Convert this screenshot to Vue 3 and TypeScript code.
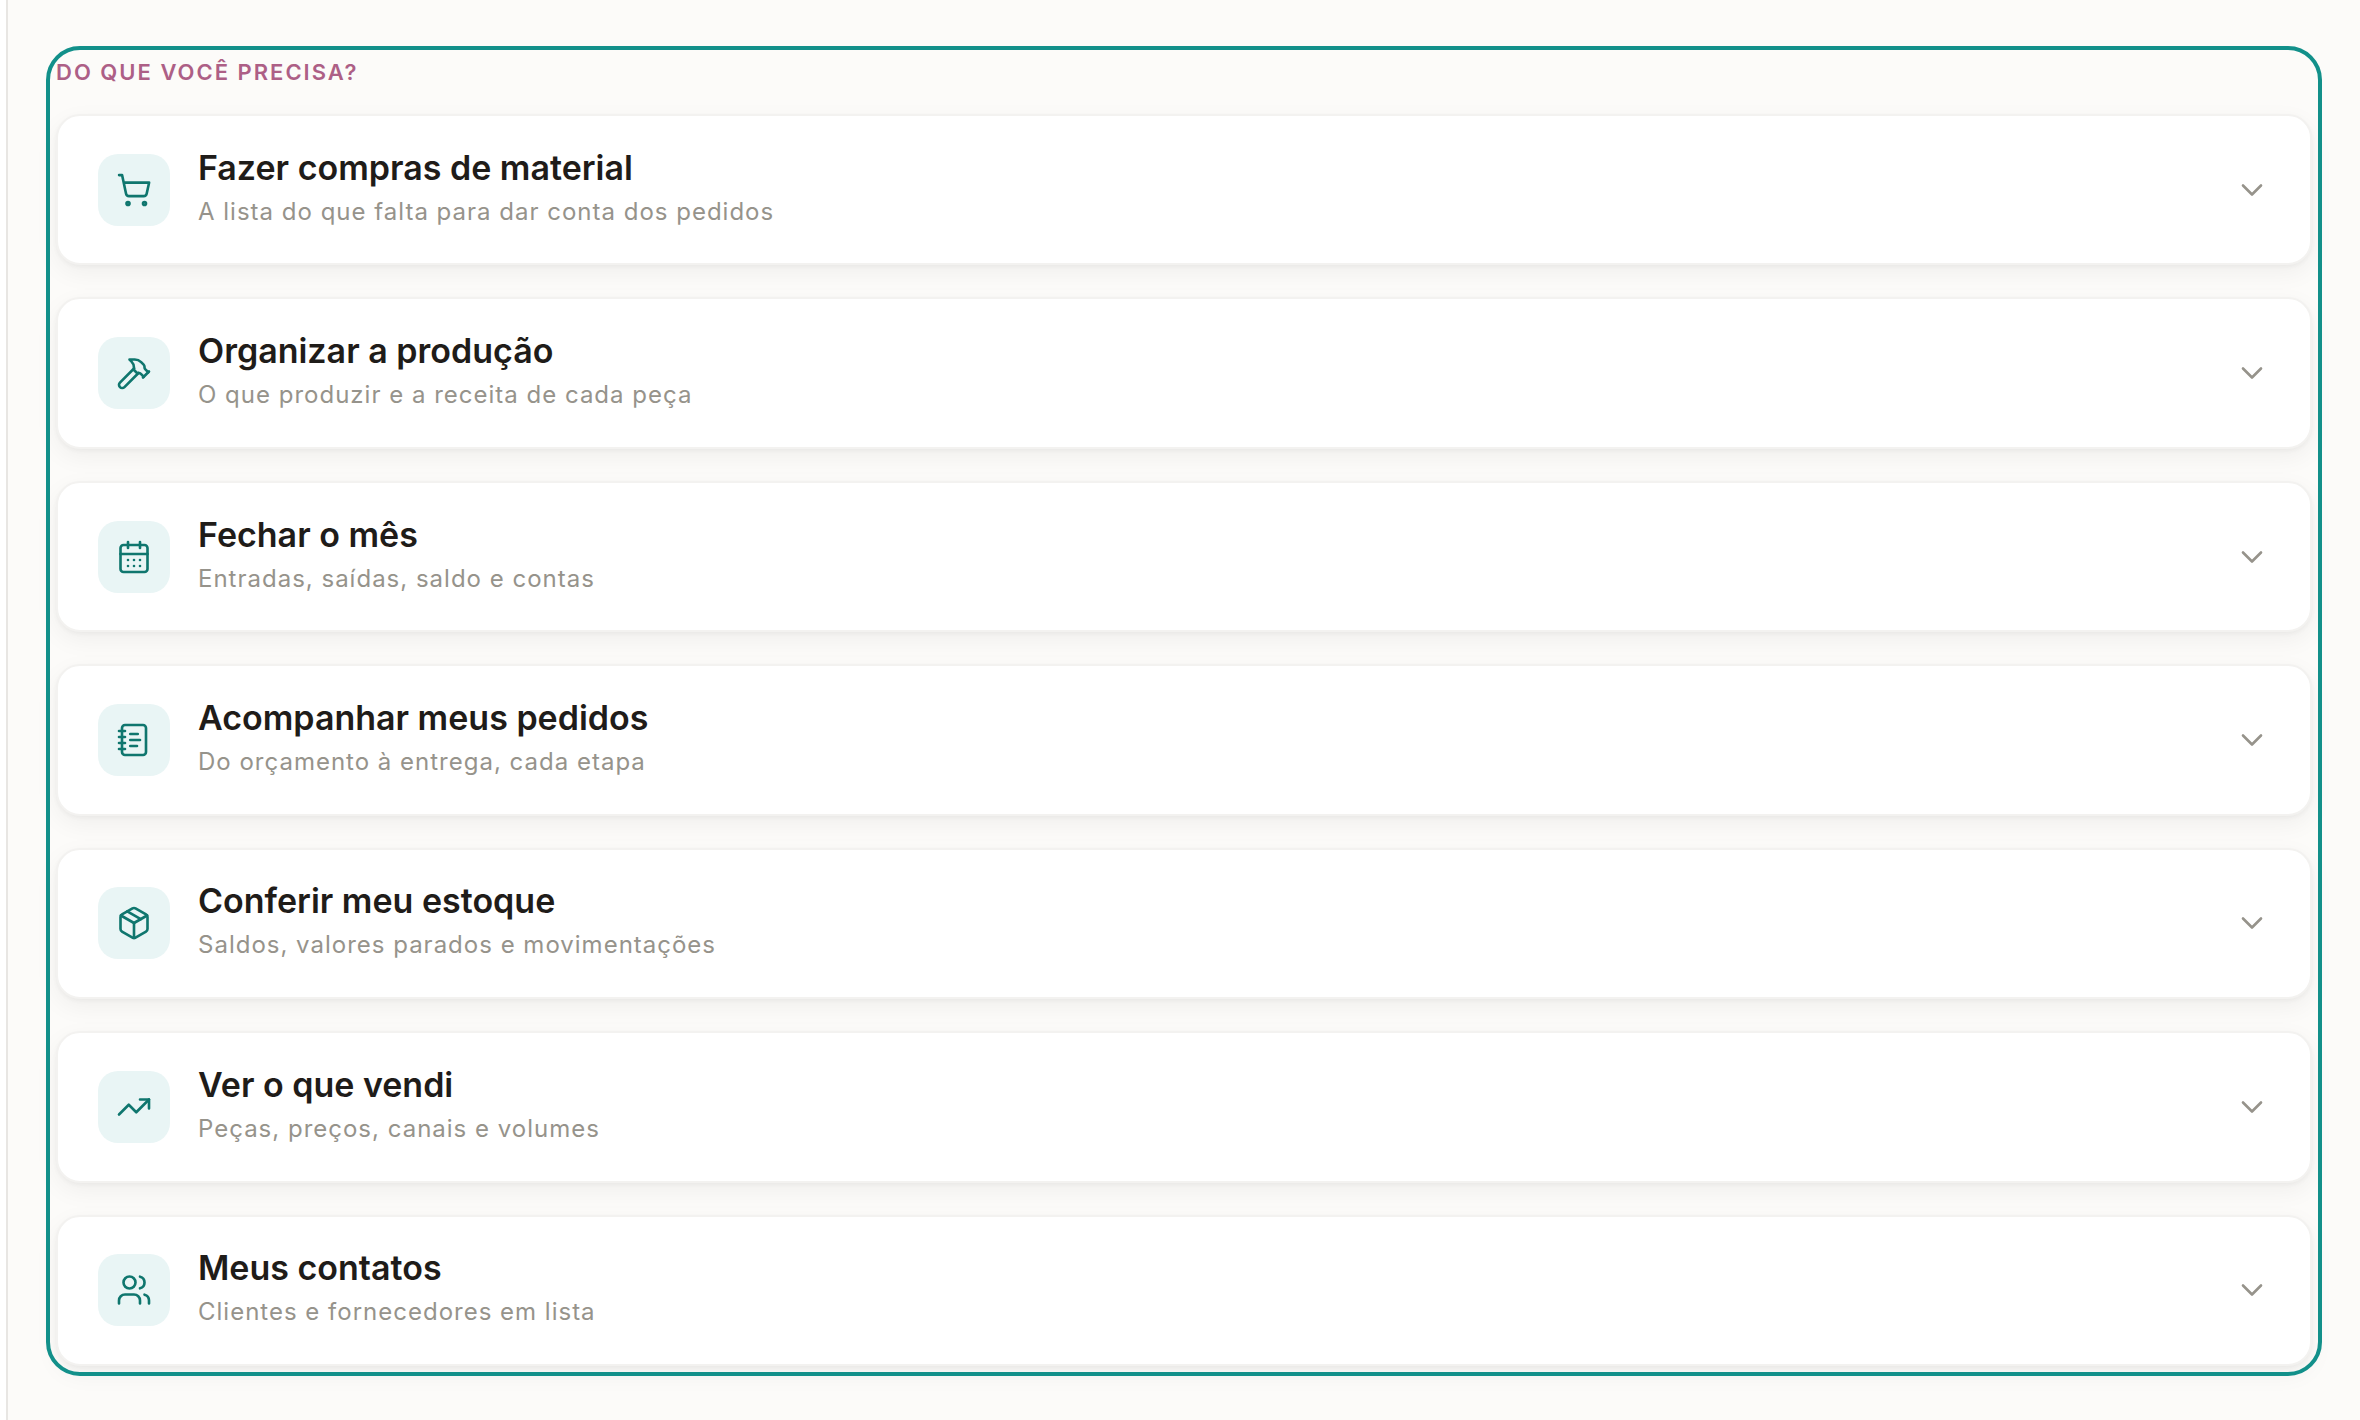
<script setup lang="ts">
import { ref } from 'vue'

interface Shortcut {
  id: string
  title: string
  description: string
  paths: string[]
}

const shortcuts: Shortcut[] = [
  {
    id: 'compras',
    title: 'Fazer compras de material',
    description: 'A lista do que falta para dar conta dos pedidos',
    paths: [
      'M7 21a1 1 0 1 0 2 0a1 1 0 1 0 -2 0',
      'M18 21a1 1 0 1 0 2 0a1 1 0 1 0 -2 0',
      'M2.05 2.05h2l2.66 12.42a2 2 0 0 0 2 1.58h9.78a2 2 0 0 0 1.95-1.57l1.65-7.43H5.12',
    ],
  },
  {
    id: 'producao',
    title: 'Organizar a produção',
    description: 'O que produzir e a receita de cada peça',
    paths: [
      'm15 12-9.373 9.373a1 1 0 0 1-3.001-3L12 9',
      'm18 15 4-4',
      'm21.5 11.5-1.914-1.914A2 2 0 0 1 19 8.172v-.344a2 2 0 0 0-.586-1.414l-1.657-1.657A6 6 0 0 0 12.516 3H9l1.243 1.243A6 6 0 0 1 12 8.485V10l2 2h1.172a2 2 0 0 1 1.414.586L18.5 14.5',
    ],
  },
  {
    id: 'mes',
    title: 'Fechar o mês',
    description: 'Entradas, saídas, saldo e contas',
    paths: [
      'M8 2v4',
      'M16 2v4',
      'M5 4h14a2 2 0 0 1 2 2v14a2 2 0 0 1-2 2H5a2 2 0 0 1-2-2V6a2 2 0 0 1 2-2z',
      'M3 10h18',
      'M8 14h.01M12 14h.01M16 14h.01M8 18h.01M12 18h.01M16 18h.01',
    ],
  },
  {
    id: 'pedidos',
    title: 'Acompanhar meus pedidos',
    description: 'Do orçamento à entrega, cada etapa',
    paths: [
      'M2 6h4M2 10h4M2 14h4M2 18h4',
      'M6 2h12a2 2 0 0 1 2 2v16a2 2 0 0 1-2 2H6a2 2 0 0 1-2-2V4a2 2 0 0 1 2-2z',
      'M9.5 8h5M9.5 12H16M9.5 16H14',
    ],
  },
  {
    id: 'estoque',
    title: 'Conferir meu estoque',
    description: 'Saldos, valores parados e movimentações',
    paths: [
      'M11 21.73a2 2 0 0 0 2 0l7-4A2 2 0 0 0 21 16V8a2 2 0 0 0-1-1.73l-7-4a2 2 0 0 0-2 0l-7 4A2 2 0 0 0 3 8v8a2 2 0 0 0 1 1.73z',
      'M12 22V12',
      'M3.29 7 12 12 20.71 7',
      'm7.5 4.27 9 5.15',
    ],
  },
  {
    id: 'vendas',
    title: 'Ver o que vendi',
    description: 'Peças, preços, canais e volumes',
    paths: ['M22 7 13.5 15.5 8.5 10.5 2 17', 'M16 7h6v6'],
  },
  {
    id: 'contatos',
    title: 'Meus contatos',
    description: 'Clientes e fornecedores em lista',
    paths: [
      'M16 21v-2a4 4 0 0 0-4-4H6a4 4 0 0 0-4 4v2',
      'M5 7a4 4 0 1 0 8 0a4 4 0 1 0 -8 0',
      'M22 21v-2a4 4 0 0 0-3-3.87',
      'M16 3.13a4 4 0 0 1 0 7.75',
    ],
  },
]

const selected = ref<string | null>(null)

function toggle(id: string): void {
  selected.value = selected.value === id ? null : id
}
</script>

<template>
  <div class="shell">
    <main class="page">
      <section class="needs" aria-labelledby="needs-title">
        <h2 id="needs-title" class="needs-title">DO QUE VOCÊ PRECISA?</h2>
        <ul class="list">
          <li v-for="item in shortcuts" :key="item.id" class="item">
            <button
              type="button"
              class="card"
              :aria-expanded="selected === item.id"
              @click="toggle(item.id)"
            >
              <span class="tile">
                <svg class="icon" viewBox="0 0 24 24" aria-hidden="true">
                  <path v-for="d in item.paths" :key="d" :d="d" />
                </svg>
              </span>
              <span class="text">
                <span class="title">{{ item.title }}</span>
                <span class="description">{{ item.description }}</span>
              </span>
              <svg class="icon chevron" viewBox="0 0 24 24" aria-hidden="true">
                <path d="m6 9 6 6 6-6" />
              </svg>
            </button>
          </li>
        </ul>
      </section>
    </main>
  </div>
</template>

<style>
body {
  margin: 0;
  background: #fcfbf9;
}
</style>

<style scoped>
.shell {
  box-sizing: border-box;
  display: flex;
  min-height: 100vh;
  padding-left: 6px;
  background: #ffffff;
  font-family: Inter, 'Liberation Sans', sans-serif;
}

.page {
  flex: 1;
  display: flex;
  min-width: 0;
  padding: 56px 48px 54px;
  border-left: 2px solid #e8e6e3;
  background: #fcfbf9;
}

.needs {
  flex: 1;
  display: flex;
  flex-direction: column;
  gap: 26px;
  min-width: 0;
  border-radius: 24px;
  outline: 4px solid #12908a;
  outline-offset: 6px;
}

.needs-title {
  margin: 0;
  color: #ad5f86;
  font-size: 22px;
  font-weight: 600;
  line-height: 32px;
  letter-spacing: 2px;
}

.list {
  flex: 1;
  display: grid;
  grid-auto-rows: 1fr;
  gap: 32px;
  margin: 0;
  padding: 0;
  list-style: none;
}

.item {
  display: flex;
}

.card {
  flex: 1;
  display: flex;
  align-items: center;
  gap: 28px;
  min-width: 0;
  padding: 32px 40px;
  border: 2px solid #f3f2f0;
  border-radius: 24px;
  background: #ffffff;
  box-shadow:
    0 2px 4px rgba(28, 25, 23, 0.04),
    0 8px 24px rgba(28, 25, 23, 0.05);
  font: inherit;
  text-align: left;
  cursor: pointer;
}

.tile {
  flex: none;
  display: flex;
  align-items: center;
  justify-content: center;
  width: 72px;
  height: 72px;
  border-radius: 20px;
  background: #e9f5f5;
  color: #0f766e;
}

.icon {
  flex: none;
  width: 36px;
  height: 36px;
  fill: none;
  stroke: currentColor;
  stroke-width: 1.75;
  stroke-linecap: round;
  stroke-linejoin: round;
}

.text {
  flex: 1;
  display: flex;
  flex-direction: column;
  gap: 8px;
  min-width: 0;
}

.title {
  color: #1f1c19;
  font-size: 34px;
  font-weight: 600;
  line-height: 36px;
}

.description {
  color: #96938b;
  font-size: 24px;
  line-height: 36px;
  letter-spacing: 1px;
}

.chevron {
  color: #96938b;
}
</style>
